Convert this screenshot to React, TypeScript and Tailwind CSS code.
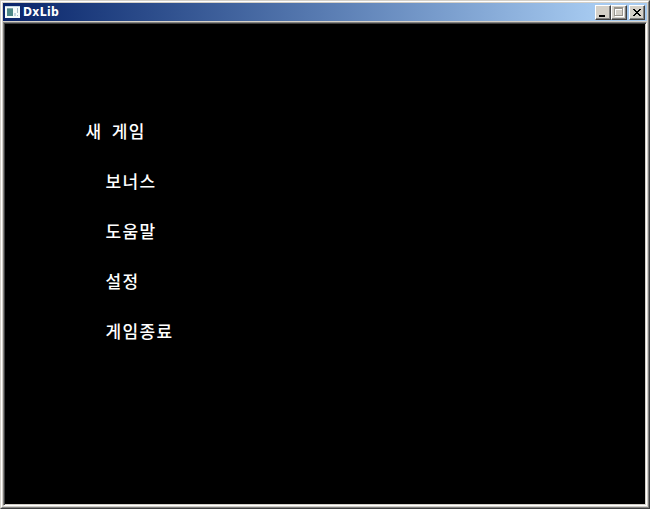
import React from 'react';

const menuItems = ['새 게임', '보너스', '도움말', '설정', '게임종료'];

const buttonClass =
  'w-4 h-[15px] bg-[#d4d0c8] border border-t-white border-l-white border-r-[#404040] border-b-[#404040] shadow-[inset_-1px_-1px_0_#808080]';

const WindowIcon: React.FC = () => (
  <svg width="16" height="16" viewBox="0 0 16 16" shapeRendering="crispEdges">
    <rect x="0" y="2" width="15" height="12" fill="#f4fafa" />
    <rect x="0" y="2" width="15" height="1" fill="#c4d8e4" />
    <rect x="2" y="4" width="6" height="8" fill="#4c8787" />
    <rect x="2" y="4" width="6" height="1" fill="#83a8ad" />
    <rect x="9" y="9" width="2" height="3" fill="#c0d3df" />
    <rect x="12" y="4" width="1" height="5" fill="#a3bcc8" />
    <rect x="12" y="11" width="1" height="1" fill="#a3bcc8" />
  </svg>
);

const TitleBar: React.FC = () => (
  <header className="flex h-[18px] items-center bg-gradient-to-r from-[#0a246a] to-[#a6caf0] to-[92%] pl-0.5 pr-0.5">
    <WindowIcon />
    <h1 className="ml-0.5 flex-1 font-['DejaVu_Sans_Condensed','DejaVu_Sans',sans-serif] text-[12px] leading-[16px] font-bold tracking-[0.4px] text-white">
      DxLib
    </h1>
    <button aria-label="Minimize" className={buttonClass}>
      <svg width="14" height="13" viewBox="0 0 14 13" shapeRendering="crispEdges">
        <path d="M3 9h6v2H3z" fill="#000" />
      </svg>
    </button>
    <button aria-label="Maximize" className={buttonClass}>
      <svg width="14" height="13" viewBox="0 0 14 13" shapeRendering="crispEdges">
        <path d="M3 2h9v9H3zM4 4v6h7V4z" fill="#fff" fillRule="evenodd" />
        <path d="M2 1h9v9H2zM3 3v6h7V3z" fill="#99968f" fillRule="evenodd" />
      </svg>
    </button>
    <button aria-label="Close" className={`${buttonClass} ml-0.5`}>
      <svg width="14" height="13" viewBox="0 0 14 13" shapeRendering="crispEdges">
        <path
          d="M3 3h2v1h1v1h2v-1h1v-1h2v1h-1v1h-1v1h-1v1h1v1h1v1h1v1h-2v-1h-1v-1h-2v1h-1v1h-2v-1h1v-1h1v-1h1v-1h-1v-1h-1v-1h-1z"
          fill="#000"
        />
      </svg>
    </button>
  </header>
);

export default function App() {
  return (
    <div className="flex h-[509px] w-[650px] flex-col border border-t-[#d4d0c8] border-l-[#d4d0c8] border-r-[#404040] border-b-[#404040] bg-[#d4d0c8]">
      <div className="flex flex-1 flex-col border border-t-white border-l-white border-r-[#808080] border-b-[#808080] p-px">
        <TitleBar />
        <main className="mt-px flex-1 border border-t-[#808080] border-l-[#808080] border-r-white border-b-white bg-black pt-[95px] pl-[81.5px] shadow-[inset_1px_1px_0_#404040,inset_-1px_-1px_0_#d4d0c8]">
          <ul className="font-['Noto_Sans_CJK_KR',sans-serif] text-[17px] leading-[26px] font-medium tracking-[1.36px] text-white">
            {menuItems.map((item, i) => (
              <li key={item} className={i === 0 ? 'mb-6 h-[26px] [word-spacing:4px]' : 'mb-6 ml-5 h-[26px]'}>
                {item}
              </li>
            ))}
          </ul>
        </main>
      </div>
    </div>
  );
}
